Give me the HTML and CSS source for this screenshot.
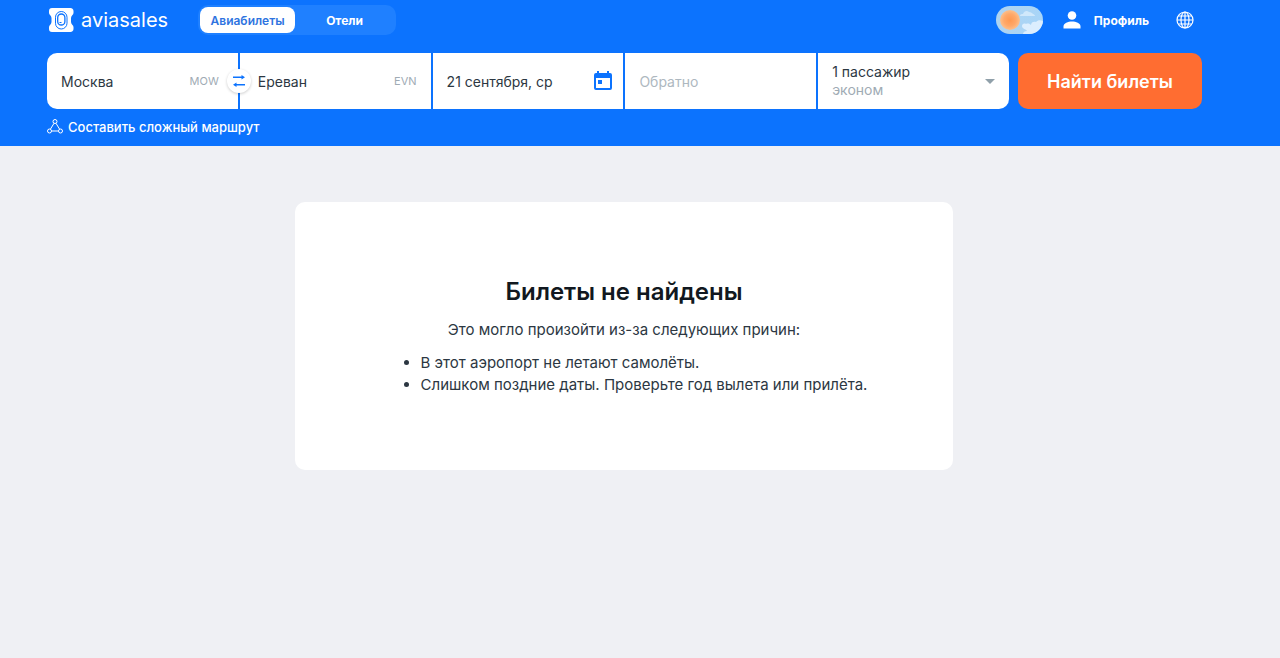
FILE: index.html
```html
<!DOCTYPE html>
<html lang="ru">
<head>
    <meta charset="UTF-8">
    <meta name="viewport" content="width=device-width, initial-scale=1.0">
    <title>Авиабилеты</title>
    <link rel="stylesheet" href="styles.css">
</head>
<body>
    <header class="header">
        <div class="navbar">
            <a href="#" class="logo">
                <svg class="logo-icon" width="26" height="26" viewBox="0 0 26 26" aria-hidden="true">
                    <path d="M4 1h18a3 3 0 0 1 3.500 3v2c0 2-2.500 2.500-2.500 5v4c0 2.500 2.500 3 2.500 5v2a3 3 0 0 1-3.500 3H4a3 3 0 0 1-3-3v-2c0-2 2.500-2.500 2.500-5v-4c0-2.500-2.500-3-2.500-5V4a3 3 0 0 1 3-3z" fill="#fff"/>
                    <rect x="7.500" y="4.500" width="11.500" height="17.500" rx="5.750" fill="none" stroke="#0c73fe" stroke-width="1"/>
                    <rect x="9.700" y="7" width="7.200" height="11" rx="3.600" fill="none" stroke="#0c73fe" stroke-width="1.300"/>
                    <path d="M11.500 15.500h2" fill="none" stroke="#0c73fe" stroke-width="1"/>
                </svg>
                <span class="logo-text">aviasales</span>
            </a>
            <nav class="tabs">
                <a href="#" class="tab tab-active">Авиабилеты</a>
                <a href="#" class="tab">Отели</a>
            </nav>
            <div class="user-menu">
                <label class="theme-toggle">
                    <input type="checkbox" class="theme-input" aria-label="Тёмная тема">
                    <svg width="47" height="28" viewBox="0 0 47 28" aria-hidden="true">
                        <defs>
                            <radialGradient id="sun">
                                <stop offset="0" stop-color="#ff9850"/>
                                <stop offset="0.600" stop-color="#ffa868"/>
                                <stop offset="1" stop-color="#fbc08d"/>
                            </radialGradient>
                            <linearGradient id="sky" x1="0" x2="1">
                                <stop offset="0" stop-color="#aed3f0"/>
                                <stop offset="1" stop-color="#a8d5f8"/>
                            </linearGradient>
                            <clipPath id="pill"><rect width="47" height="28" rx="14"/></clipPath>
                        </defs>
                        <g clip-path="url(#pill)">
                            <rect width="47" height="28" fill="url(#sky)"/>
                            <path d="M24 10c0-2 2-2 3-2 1-3 4-4 6-2 2 0 3 1 4 2 1 0 2 1 2 2z" fill="#d0e8fb"/>
                            <path d="M26 20c0-2 2-3 4-2 2-1 4 0 5 1 0-3 3-4 5-3 2-2 4-2 7-1v13H27c0-2 2-3 4-3-1-2-5-2-5-5z" fill="#dceefe"/>
                        </g>
                        <circle cx="14" cy="14" r="10" fill="url(#sun)"/>
                    </svg>
                </label>
                <a href="#" class="profile">
                    <svg width="18" height="18" viewBox="0 0 18 18" fill="#fff" aria-hidden="true">
                        <circle cx="9" cy="4.500" r="4.300"/>
                        <path d="M0.500 17.500v-2C0.500 12 5 10.500 9 10.500s8.500 1.500 8.500 5v2z"/>
                    </svg>
                    <span>Профиль</span>
                </a>
                <button type="button" class="language" aria-label="Язык">
                    <svg width="18" height="18" viewBox="0 0 18 18" fill="none" stroke="#fff" stroke-width="1.200" aria-hidden="true">
                        <circle cx="9" cy="9" r="8"/>
                        <ellipse cx="9" cy="9" rx="4" ry="8"/>
                        <path d="M9 1v16M1 9h16M2.200 5h13.600M2.200 13h13.600"/>
                    </svg>
                </button>
            </div>
        </div>

        <form class="search">
            <div class="fields">
                <div class="field field-origin">
                    <input type="text" id="origin" class="field-input" value="Москва" aria-label="Откуда">
                    <label for="origin" class="city-code">MOW</label>
                    <button type="button" class="swap" aria-label="Поменять местами">
                        <svg width="14" height="12" viewBox="0 0 14 12" fill="#0c73fe" aria-hidden="true">
                            <path d="M1 1.500h8.500V0L13 2.250 9.500 4.500V3H1z"/>
                            <path d="M13 9H4.500V7.500L1 9.750 4.500 12v-1.500H13z"/>
                        </svg>
                    </button>
                </div>
                <div class="field field-destination">
                    <input type="text" id="destination" class="field-input" value="Ереван" aria-label="Куда">
                    <label for="destination" class="city-code">EVN</label>
                </div>
                <div class="field field-date">
                    <input type="text" id="depart" class="field-input" value="21 сентября, ср" aria-label="Туда">
                    <label for="depart" class="calendar">
                        <svg width="18" height="20" viewBox="0 0 18 20" aria-hidden="true">
                            <path fill="#0c73fe" fill-rule="evenodd" d="M3 0h2v2h8V0h2v2h1a2 2 0 0 1 2 2v13a2 2 0 0 1-2 2H2a2 2 0 0 1-2-2V4a2 2 0 0 1 2-2h1zM2 7v10h14V7z"/>
                            <path fill="#0c73fe" d="M4 9h4v4H4z"/>
                        </svg>
                    </label>
                </div>
                <div class="field">
                    <input type="text" class="field-input" placeholder="Обратно" aria-label="Обратно">
                </div>
                <button type="button" class="field passengers">
                    <span class="passengers-text">
                        <span>1 пассажир</span>
                        <span class="trip-class">эконом</span>
                    </span>
                    <svg width="10" height="5" viewBox="0 0 10 5" aria-hidden="true">
                        <path d="M0 0h10L5 5z" fill="#90a0aa"/>
                    </svg>
                </button>
            </div>
            <button type="submit" class="submit">Найти билеты</button>
        </form>

        <a href="#" class="multi-route">
            <svg width="16" height="16" viewBox="0 0 16 16" fill="none" stroke="#fff" stroke-width="1" aria-hidden="true">
                <circle cx="8" cy="2.500" r="2"/>
                <circle cx="2.500" cy="12" r="2"/>
                <circle cx="13.500" cy="12" r="2"/>
                <path d="M7 4.300L3.400 10.200M9 4.300l3.600 5.900M4.500 12h7"/>
            </svg>
            <span>Составить сложный маршрут</span>
        </a>
    </header>

    <main class="content">
        <section class="message">
            <h1 class="message-title">Билеты не найдены</h1>
            <p class="message-text">Это могло произойти из-за следующих причин:</p>
            <ul class="reasons">
                <li>В этот аэропорт не летают самолёты.</li>
                <li>Слишком поздние даты. Проверьте год вылета или прилёта.</li>
            </ul>
        </section>
    </main>
</body>
</html>
```
FILE: styles.css
```css
* {
    box-sizing: border-box;
}

body {
    margin: 0;
    min-height: 100vh;
    background-color: #eff0f4;
    color: #2c3742;
    font-family: Inter, sans-serif;
    font-size: 15px;
}

a {
    color: inherit;
    text-decoration: none;
}

button {
    border: none;
    padding: 0;
    font-family: inherit;
    cursor: pointer;
}

svg {
    display: block;
}

/* Header */

.header {
    padding: 5px 78px 10px 47px;
    background-color: #0c73fe;
    color: #fff;
}

.navbar {
    display: flex;
    align-items: center;
    height: 30px;
    margin-bottom: 18px;
}

.logo {
    display: flex;
    align-items: center;
    gap: 7px;
    margin-left: 1px;
}

.logo-text {
    font-size: 20px;
    line-height: 24px;
}

.tabs {
    display: grid;
    grid-template-columns: 95px 1fr;
    width: 198px;
    height: 30px;
    margin-left: 30px;
    padding: 2px;
    border-radius: 10px;
    background-color: #1f80ff;
}

.tab {
    display: flex;
    align-items: center;
    justify-content: center;
    border-radius: 8px;
    font-size: 12px;
    font-weight: 700;
}

.tab-active {
    background-color: #fff;
    color: #2f74e0;
    font-weight: 600;
}

.user-menu {
    display: flex;
    align-items: center;
    margin-left: auto;
    padding-right: 8px;
}

.theme-toggle {
    position: relative;
    cursor: pointer;
}

.theme-input {
    position: absolute;
    inset: 0;
    margin: 0;
    opacity: 0;
}

.profile {
    display: flex;
    align-items: center;
    gap: 13px;
    margin: 0 27px 0 20px;
    font-size: 12px;
    font-weight: 700;
}

.language {
    background: none;
}

/* Search form */

.search {
    display: flex;
    gap: 9px;
    height: 56px;
}

.fields {
    display: grid;
    grid-template-columns: repeat(5, 1fr);
    gap: 2px;
    flex: 1;
}

.field {
    position: relative;
    display: flex;
    align-items: center;
    min-width: 0;
    padding: 0 14px;
    background-color: #fff;
    color: #2c3742;
}

.field-origin {
    padding-right: 19px;
    border-radius: 10px 0 0 10px;
}

.field-destination {
    padding-left: 18px;
}

.field-date {
    padding-right: 11px;
}

.field-input {
    flex: 1;
    min-width: 0;
    padding: 0;
    border: none;
    outline: none;
    background: none;
    color: #2c3742;
    font-family: inherit;
    font-size: 14px;
    font-weight: 400;
}

.field-input::placeholder {
    color: #aeb8c0;
}

.city-code {
    color: #a0abb4;
    font-size: 11px;
    font-weight: 400;
}

.swap {
    position: absolute;
    top: 16px;
    right: -13px;
    z-index: 1;
    display: flex;
    align-items: center;
    justify-content: center;
    width: 24px;
    height: 24px;
    border-radius: 50%;
    background-color: #fff;
    box-shadow: 0 1px 3px rgba(0, 0, 0, 0.2);
}

.passengers {
    justify-content: space-between;
    border-radius: 0 10px 10px 0;
    font-size: 14px;
    font-weight: 400;
    text-align: left;
}

.passengers-text {
    display: flex;
    flex-direction: column;
    line-height: 18px;
}

.trip-class {
    color: #a0abb4;
}

.submit {
    width: 184px;
    border-radius: 10px;
    background-color: #ff6d31;
    color: #fff;
    font-size: 18px;
    font-weight: 600;
}

.multi-route {
    display: flex;
    align-items: center;
    gap: 5px;
    width: fit-content;
    margin-top: 9px;
    font-size: 13px;
    line-height: 18px;
    font-weight: 500;
}

/* Message card */

.content {
    padding: 56px 79px 56px 47px;
}

.message {
    display: flex;
    flex-direction: column;
    align-items: center;
    max-width: 658px;
    margin: 0 auto;
    padding: 74px 40px;
    border-radius: 10px;
    background-color: #fff;
    font-weight: 400;
    line-height: 22px;
}

.message-title {
    margin: 0;
    color: #111820;
    font-size: 24px;
    font-weight: 600;
    line-height: 32px;
}

.message-text {
    margin: 11px 0;
}

.reasons {
    margin: 0;
    padding-left: 40px;
}
```
